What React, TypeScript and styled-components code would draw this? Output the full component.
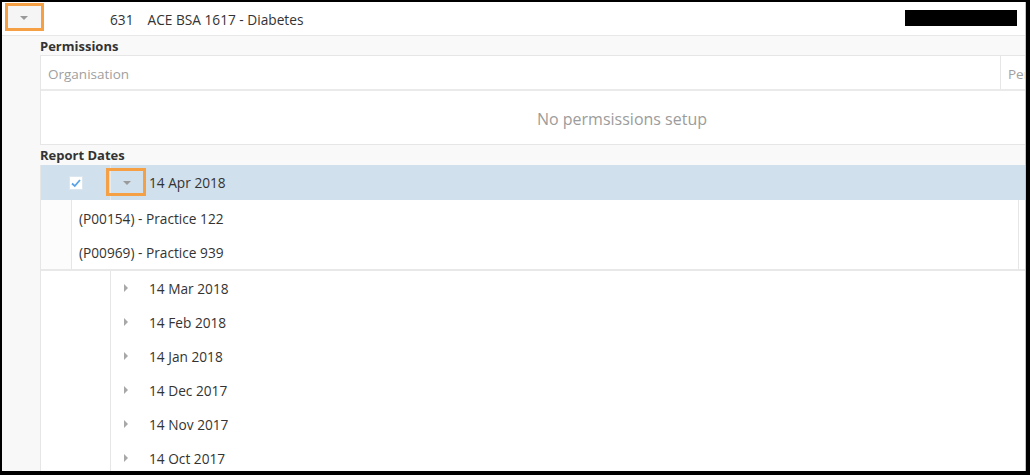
import React from 'react'
import styled, { createGlobalStyle } from 'styled-components'

const GlobalStyle = createGlobalStyle`
  html, body {
    margin: 0;
    padding: 0;
    background: #000;
  }
  body {
    font-family: "Open Sans", "Noto Sans", "Liberation Sans", sans-serif;
    color: #333;
  }
  * {
    box-sizing: border-box;
  }
`

const dates = ['14 Mar 2018', '14 Feb 2018', '14 Jan 2018', '14 Dec 2017', '14 Nov 2017', '14 Oct 2017']
const practices = ['(P00154) - Practice 122', '(P00969) - Practice 939']

function App() {
  return (
    <>
      <GlobalStyle />
      <Frame>
        <Page>
          <TopRow>
            <TopExpander>
              <CaretDown />
              <Highlight />
            </TopExpander>
            <Id>631</Id>
            <Name>ACE BSA 1617 - Diabetes</Name>
            <Redacted />
          </TopRow>
          <Body>
            <Gutter />
            <Main>
              <SectionTitle tight>Permissions</SectionTitle>
              <Table>
                <HeadRow>
                  <HeadCell>Organisation</HeadCell>
                  <HeadCell divider>Permission</HeadCell>
                </HeadRow>
                <EmptyMessage>No permsissions setup</EmptyMessage>
              </Table>
              <SectionTitle>Report Dates</SectionTitle>
              <DateList>
                <SelectedRow>
                  <CheckCell>
                    <CheckBox>
                      <svg width="12" height="12" viewBox="0 0 12 12">
                        <polyline points="2,6.5 4.8,9 10,3" fill="none" stroke="#5aa3e6" strokeWidth="1.8" />
                      </svg>
                    </CheckBox>
                  </CheckCell>
                  <RowExpander selected>
                    <CaretDown />
                    <Highlight row />
                  </RowExpander>
                  <DateText>14 Apr 2018</DateText>
                </SelectedRow>
                <DetailRow>
                  <DetailIndent />
                  <DetailPanel>
                    {practices.map((p) => (
                      <DetailLine key={p}>{p}</DetailLine>
                    ))}
                  </DetailPanel>
                </DetailRow>
                {dates.map((d) => (
                  <DateRow key={d}>
                    <span />
                    <RowExpander>
                      <CaretRight />
                    </RowExpander>
                    <DateText>{d}</DateText>
                  </DateRow>
                ))}
              </DateList>
            </Main>
          </Body>
        </Page>
      </Frame>
    </>
  )
}

export default App

const Frame = styled.div`
width: 1030px;
height: 475px;
border-style: solid;
border-color: #000;
border-width: 2px 4px 4px 2px;
overflow: hidden;
`
const Page = styled.div`
height: 100%;
background: #fff;
border-right: 1px solid #c4c4c4;
display: flex;
flex-direction: column;
overflow: hidden;
`
const TopRow = styled.div`
height: 34px;
flex-shrink: 0;
display: flex;
align-items: center;
border-bottom: 1px solid #e8e8e8;
font-size: 13.7px;
`
const TopExpander = styled.div`
position: relative;
width: 38px;
height: 100%;
display: flex;
align-items: center;
justify-content: center;
padding-left: 6px;
padding-bottom: 1px;
`
const Highlight = styled.div<{ row?: boolean }>`
position: absolute;
border: 3px solid #f5a045;
top: ${(p) => (p.row ? '3px' : '1px')};
left: ${(p) => (p.row ? '-5px' : '3px')};
width: ${(p) => (p.row ? '40px' : '39px')};
height: 28px;
background: ${(p) => (p.row ? 'transparent' : 'rgba(0, 0, 0, 0.04)')};
pointer-events: none;
`
const CaretDown = styled.span`
position: relative;
z-index: 1;
width: 0;
height: 0;
border-left: 4px solid transparent;
border-right: 4px solid transparent;
border-top: 4px solid #9a9a9a;
`
const CaretRight = styled.span`
width: 0;
height: 0;
border-top: 4px solid transparent;
border-bottom: 4px solid transparent;
border-left: 4px solid #a8a8a8;
margin-left: 1px;
`
const Id = styled.span`
margin-left: 70px;
padding-top: 1px;
`
const Name = styled.span`
margin-left: 14px;
padding-top: 1px;
flex: 1;
`
const Redacted = styled.div`
width: 112px;
height: 16px;
background: #000;
margin-right: 8px;
margin-bottom: 1px;
`
const Body = styled.div`
flex: 1;
display: flex;
min-height: 0;
`
const Gutter = styled.div`
width: 38px;
flex-shrink: 0;
background: #f8f8f8;
`
const Main = styled.div`
flex: 1;
min-width: 0;
overflow: hidden;
display: flex;
flex-direction: column;
`
const SectionTitle = styled.div<{ tight?: boolean }>`
height: ${(p) => (p.tight ? '19px' : '20px')};
line-height: ${(p) => (p.tight ? '21px' : '20px')};
background: #f9f9f9;
font-size: 13px;
font-weight: 700;
color: #333;
flex-shrink: 0;
`
const Table = styled.div`
width: 1163px;
flex-shrink: 0;
border: 1px solid #e6e6e6;
border-right: none;
`
const HeadRow = styled.div`
display: grid;
grid-template-columns: 959px 1fr;
height: 35px;
border-bottom: 2px solid #eaeaea;
`
const HeadCell = styled.div<{ divider?: boolean }>`
display: flex;
align-items: center;
padding-left: 7px;
padding-top: 2px;
font-size: 13.5px;
color: #a0a0a0;
white-space: nowrap;
border-left: ${(p) => (p.divider ? '1px solid #e6e6e6' : 'none')};
`
const EmptyMessage = styled.div`
height: 53px;
display: flex;
align-items: center;
justify-content: center;
padding-top: 2px;
font-size: 16px;
color: #9c9c9c;
`
const DateList = styled.div`
flex: 1;
border-left: 1px solid #e6e6e6;
`
const SelectedRow = styled.div`
display: grid;
grid-template-columns: 69px 39px 1fr;
align-items: center;
height: 35px;
background: #d0e0ec;
font-size: 13.7px;
`
const CheckCell = styled.div`
display: flex;
justify-content: center;
`
const CheckBox = styled.div`
width: 14px;
height: 14px;
background: #fff;
border: 1px solid #dce6ee;
display: flex;
align-items: center;
justify-content: center;
`
const RowExpander = styled.div<{ selected?: boolean }>`
position: relative;
height: 100%;
display: flex;
align-items: center;
padding-left: 12px;
border-left: 1px solid ${(p) => (p.selected ? '#e4ecf2' : '#e6e6e6')};
`
const DateText = styled.span`
white-space: nowrap;
`
const DetailRow = styled.div`
display: flex;
height: 71px;
border-bottom: 2px solid #e8e8e8;
`
const DetailIndent = styled.div`
width: 30px;
background: #fcfcfc;
`
const DetailPanel = styled.div`
width: 948px;
border-left: 1px solid #e6e6e6;
border-right: 1px solid #e6e6e6;
padding-top: 1px;
`
const DetailLine = styled.div`
height: 34px;
display: flex;
align-items: center;
padding-left: 7px;
font-size: 13.7px;
`
const DateRow = styled.div`
display: grid;
grid-template-columns: 69px 39px 1fr;
align-items: center;
height: 34px;
font-size: 13.7px;
`
